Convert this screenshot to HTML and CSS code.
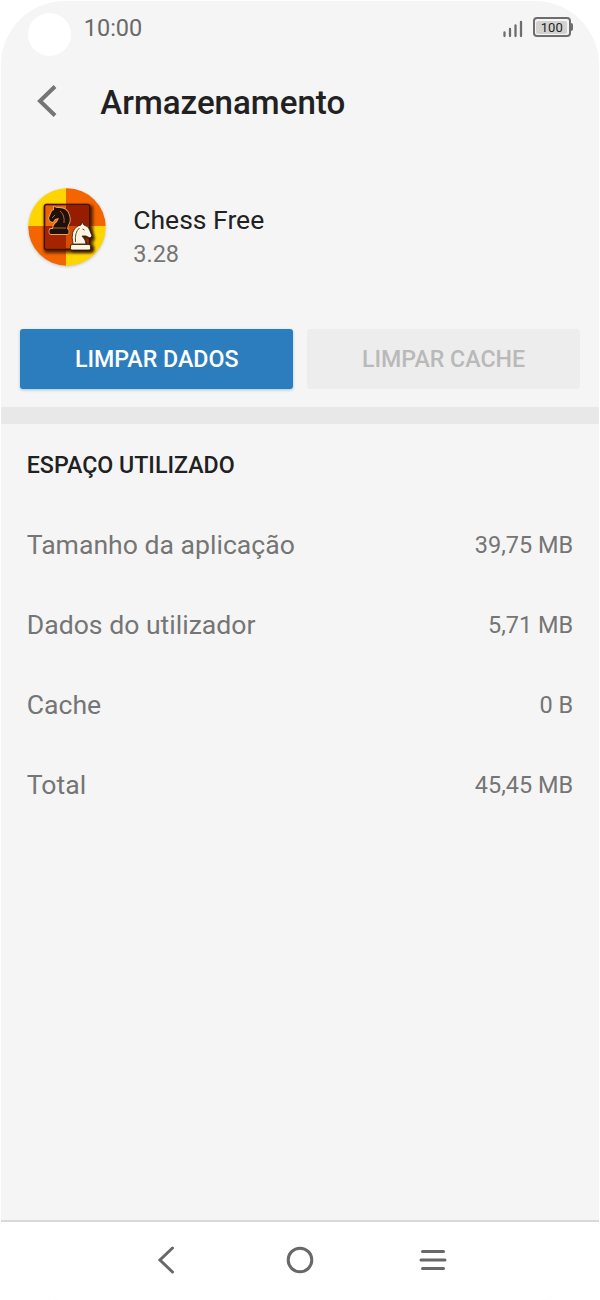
FILE: index.html
```
<!DOCTYPE html>
<html lang="pt">
<head>
<meta charset="utf-8">
<title>Armazenamento</title>
<link rel="stylesheet" href="styles.css">
</head>
<body>
<div class="screen">
  <header class="status">
    <span class="camera"></span>
    <span class="clock">10:00</span>
    <svg class="signal" width="20" height="18" viewBox="0 0 20 18"><path d="M1.500 12.500V16M7 9v7M12.500 5.500V16M18 2v14" fill="none" stroke="#6d6d6d" stroke-width="2.300" stroke-linecap="round"/></svg>
    <span class="battery"><span class="charge">100</span></span>
  </header>
  <div class="titlebar">
    <svg class="back" width="22" height="36" viewBox="0 0 22 36"><path d="M19 3.500L4 18l15 14.500" fill="none" stroke="#757575" stroke-width="4"/></svg>
    <h1 class="title">Armazenamento</h1>
  </div>
  <section class="app">
    <svg class="app-icon" width="84" height="84" viewBox="0 0 84 84">
      <defs>
        <clipPath id="disc"><circle cx="42" cy="42" r="38.700"/></clipPath>
        <linearGradient id="wood" x2="1" y2="1"><stop offset="0" stop-color="#e65f08"/><stop offset="1" stop-color="#ef7900"/></linearGradient>
        <filter id="soft" x="-30%" y="-30%" width="160%" height="160%"><feGaussianBlur stdDeviation="1.500"/></filter>
        <path id="knight" d="M4 22q0-4 4-7l2-4-4 1-2 3-3-1-1-3 3-7 2-1 0-3 3 1q10-1 12 7 2 6-1 10l-1 4z"/>
        <path id="white-knight" d="M48 59q-3-14 5-18l3-1 1-3 2 3q5 1 6 6l2 5-2 2-4-2-4 0q4 4 4 8z"/>
      </defs>
      <circle cx="42" cy="43" r="38.500" fill="#888" opacity=".5" filter="url(#soft)"/>
      <g clip-path="url(#disc)">
        <path fill="#ffd500" d="M0 0h41v41H0zM41 41h43v43H41z"/>
        <path fill="#f26500" d="M41 0h43v41H41zM0 41h41v43H0z"/>
        <rect x="19" y="20" width="49" height="48" rx="3" fill="#321000" opacity=".8" filter="url(#soft)"/>
        <rect x="19.500" y="19.500" width="45" height="45" rx="2" fill="#ad2600" stroke="#3e1300" stroke-width="1.500"/>
        <path fill="url(#wood)" d="M20.500 20.500h20.500v20.500H20.500z"/>
        <path fill="#a52400" d="M20.500 41h20.500v22H20.500z"/>
        <path fill="#971d00" d="M41 20.500h22.500v20.500H41z"/>
        <path fill="#d64c00" d="M41 41h22.500v22H41z"/>
      </g>
      <g stroke="#e3a266" stroke-width="1.800" fill="#210f08">
        <use href="#knight" x="24" y="22"/><rect x="24.500" y="44" width="19" height="5" rx="1.500"/>
      </g>
      <g fill="#210f08"><use href="#knight" x="24" y="22"/><rect x="24.500" y="44" width="19" height="5" rx="1.500"/></g>
      <path d="M28 43h13M27 33l3-3m5-4q5 4 4 12" fill="none" stroke="#b8845c" stroke-width=".8"/>
      <g fill="#2b0d00" opacity=".85" filter="url(#soft)"><use href="#white-knight" x="3" y="3"/><rect x="47" y="61" width="22" height="6"/></g>
      <g fill="#fff4df" stroke="#2b1a0d" stroke-width=".8">
        <use href="#white-knight"/>
        <rect x="45.500" y="59.500" width="20" height="5.500" rx="1.500"/>
      </g>
      <path d="M50.500 57q-1-10 4-14m3 1l2 1" fill="none" stroke="#594331" stroke-width="1"/>
    </svg>
    <div class="app-info">
      <div class="app-name">Chess Free</div>
      <div class="app-version">3.28</div>
    </div>
  </section>
  <div class="actions">
    <button class="button primary">LIMPAR DADOS</button>
    <button class="button disabled" disabled>LIMPAR CACHE</button>
  </div>
  <div class="divider"></div>
  <section class="usage">
    <h2 class="heading">ESPAÇO UTILIZADO</h2>
    <div class="row"><span class="label">Tamanho da aplicação</span><span class="value">39,75 MB</span></div>
    <div class="row"><span class="label">Dados do utilizador</span><span class="value">5,71 MB</span></div>
    <div class="row"><span class="label">Cache</span><span class="value">0 B</span></div>
    <div class="row"><span class="label">Total</span><span class="value">45,45 MB</span></div>
  </section>
  <nav class="nav">
    <svg width="30" height="30" viewBox="0 0 30 30"><path d="M20.500 3L8 15l12.500 12" fill="none" stroke="#686868" stroke-width="3" stroke-linecap="round"/></svg>
    <svg width="30" height="30" viewBox="0 0 30 30"><circle cx="15" cy="15" r="11.800" fill="none" stroke="#686868" stroke-width="3"/></svg>
    <svg width="30" height="30" viewBox="0 0 30 30"><path d="M4.500 6.500h21M3 15h24M4.500 23.500h21" fill="none" stroke="#686868" stroke-width="3" stroke-linecap="round"/></svg>
  </nav>
</div>
</body>
</html>
```
FILE: styles.css
```
* { box-sizing: border-box; }
body { margin: 0; background: #fff; font-family: Roboto, sans-serif; color: #212121; }
.screen {
  display: flex;
  flex-direction: column;
  width: 597.500px;
  height: 1299px;
  margin: 1px 0 0 1.250px;
  background: #f5f5f5;
  border-radius: 64px;
  overflow: hidden;
}
.status { display: flex; align-items: flex-start; height: 60px; padding: 12px 25px 0 26.500px; }
.camera { width: 43px; height: 43px; border-radius: 50%; background: #fff; }
.clock { margin-left: 13px; font-size: 23.500px; line-height: 31px; color: #696969; }
.signal { margin: 7px 10px 0 auto; }
.battery {
  position: relative;
  width: 38px;
  height: 20px;
  margin: 4px 3px 0 0;
  padding: 1.500px;
  border: 2px solid #6d6d6d;
  border-radius: 4px;
}
.battery::after {
  content: "";
  position: absolute;
  right: -4px;
  top: 4px;
  width: 2px;
  height: 8px;
  border-radius: 0 2px 2px 0;
  background: #6d6d6d;
}
.charge { display: block; background: #d2d2d2; border-radius: 2px; text-align: center; font-size: 13px; line-height: 14px; height: 13px; color: #222; }
.titlebar { display: flex; align-items: center; height: 80px; padding-left: 34.750px; }
.title { margin: 4px 0 0 42.250px; font-size: 33.100px; line-height: 40px; font-weight: 500; }
.app { display: flex; align-items: center; height: 174px; padding-left: 23.750px; }
.app-icon { margin-bottom: 3px; }
.app-info { margin: 17px 0 0 24.250px; }
.app-name { font-size: 26.500px; line-height: 34px; }
.app-version { font-size: 23.500px; line-height: 34px; color: #757575; }
.actions { display: flex; gap: 13.500px; height: 92px; padding: 14px 18.500px 18px 18.750px; }
.button { flex: 1; border: 0; border-radius: 3px; font: 500 23.200px/60px Roboto, sans-serif; padding: 0; height: 60px; }
.primary { background: #2c7dbe; color: #fff; box-shadow: 0 1px 3px #9cc5df; }
.disabled { background: #ededed; color: #b9b9b9; }
.divider { height: 17px; background: #e8e8e8; }
.usage { flex: 1; padding: 0 25.500px; }
.heading { margin: 0; padding-top: 1px; height: 80px; font-size: 23.200px; line-height: 80px; font-weight: 500; }
.row { display: flex; justify-content: space-between; align-items: center; height: 80px; color: #757575; }
.label { font-size: 26.600px; }
.value { padding-top: 1px; font-size: 23.500px; }
.nav {
  display: flex;
  justify-content: center;
  gap: 103px;
  height: 80px;
  padding-top: 23px;
  border-top: 2px solid #d8d8d8;
  background: #fff;
}
```
